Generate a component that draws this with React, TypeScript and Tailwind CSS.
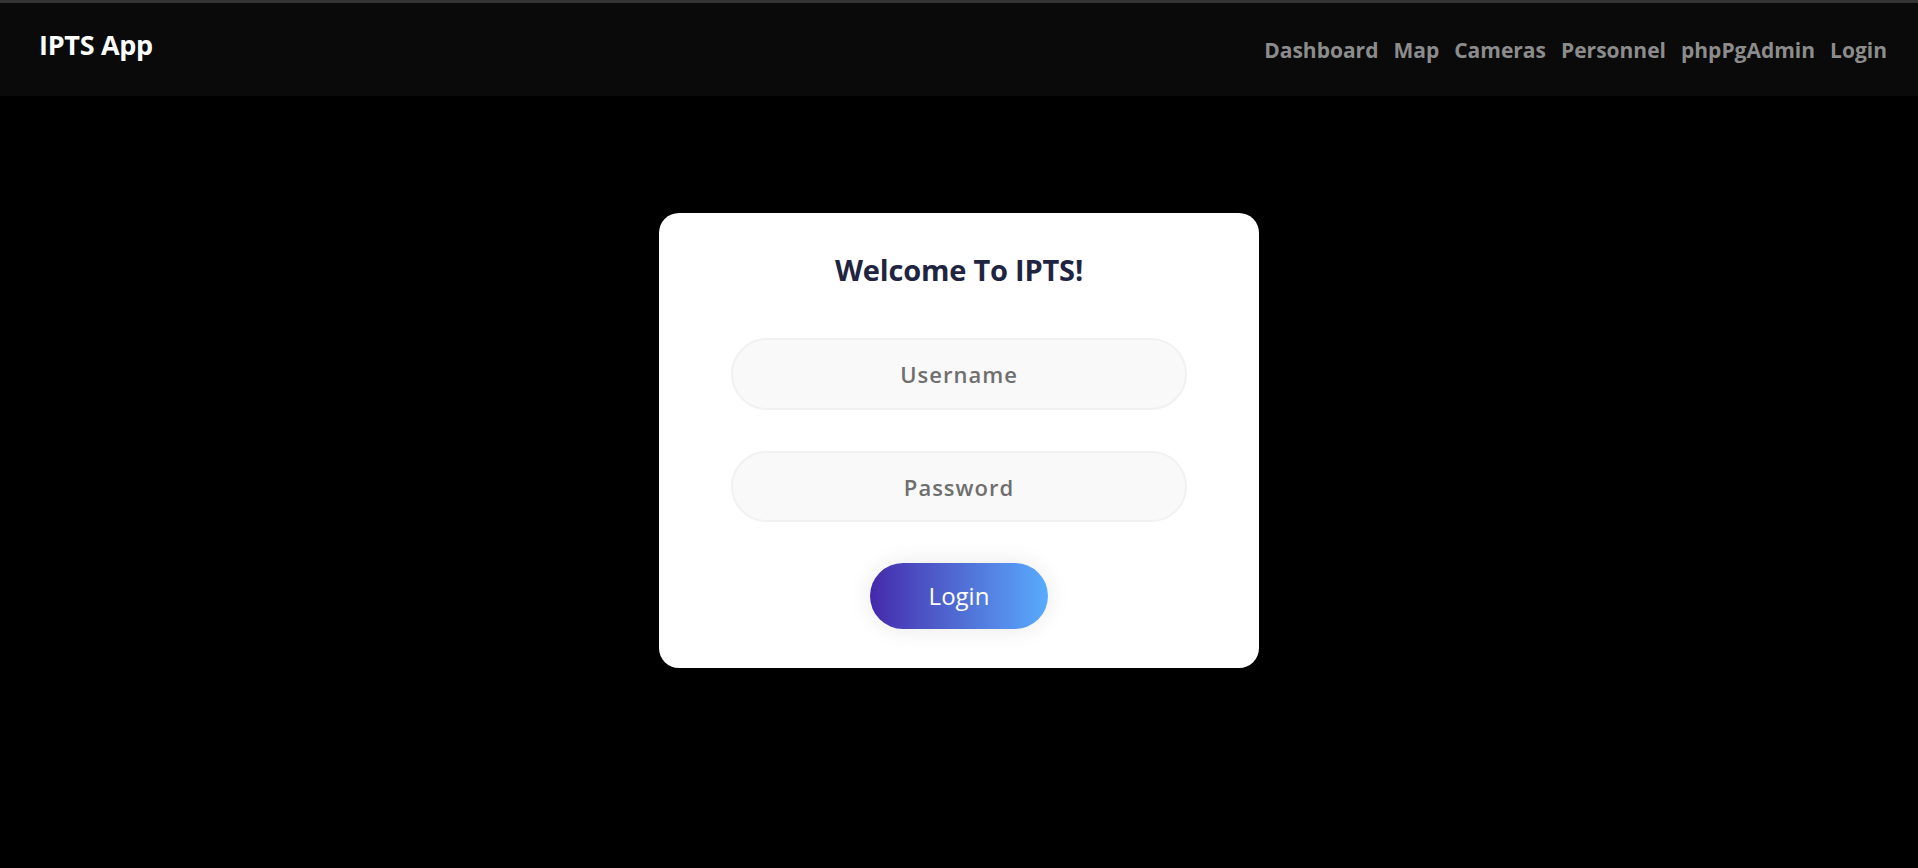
import React from "react";

const links = ["Dashboard", "Map", "Cameras", "Personnel", "phpPgAdmin", "Login"];

export default function App() {
  return (
    <div className="min-h-screen bg-black font-['Open_Sans',sans-serif]">
      {/* Top edge */}
      <div className="h-[3px] bg-[#343434]" />

      {/* Navbar */}
      <nav className="h-[93px] bg-[#0a0a0a] flex items-center justify-between pl-[39px] pr-[31px]">
        <div className="text-white font-bold text-[27px] mb-[8px] tracking-[-0.3px]">IPTS App</div>
        <div className="flex items-center gap-[15px] mt-[2px]">
          {links.map((l) => (
            <a key={l} className="text-[#8c8c8c] font-bold text-[21px] cursor-pointer">
              {l}
            </a>
          ))}
        </div>
      </nav>

      {/* Login card */}
      <div className="mx-auto mt-[117px] w-[600px] h-[455px] bg-white rounded-[20px] flex flex-col items-center pt-[37px]">
        <h1 className="text-[#1f2541] font-bold text-[29px] leading-[40px] tracking-[-0.2px]">Welcome To IPTS!</h1>

        <input
          type="text"
          placeholder="Username"
          className="mt-[48px] w-[456px] h-[72px] rounded-[36px] border-2 border-[#f1f1f1] bg-[#f9f9f9] text-center text-[22px] font-semibold tracking-[1px] text-[#555] placeholder:text-[#6f6f6f] outline-none"
        />
        <input
          type="password"
          placeholder="Password"
          className="mt-[41px] w-[456px] h-[71px] rounded-[36px] border-2 border-[#f1f1f1] bg-[#f9f9f9] text-center text-[22px] font-semibold tracking-[1px] text-[#555] placeholder:text-[#6f6f6f] outline-none"
        />

        <button className="mt-[41px] w-[178px] h-[66px] rounded-full bg-gradient-to-r from-[#4427ab] to-[#58abfd] text-white text-[24px] shadow-[0_0_24px_rgba(0,0,0,0.09)]">
          Login
        </button>
      </div>
    </div>
  );
}
